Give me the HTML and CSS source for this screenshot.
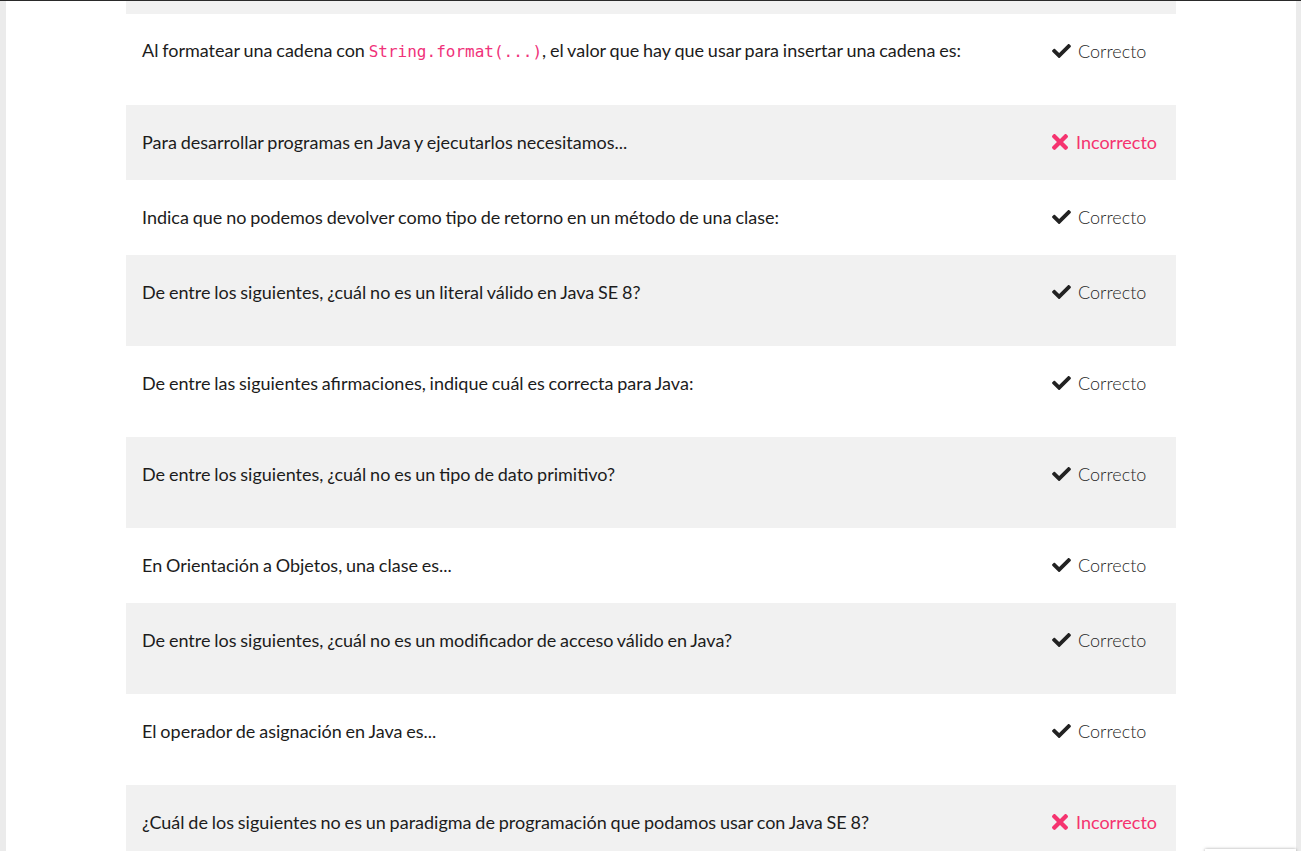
FILE: index.html
```html
<!DOCTYPE html>
<html lang="es">
<head>
<meta charset="utf-8">
<title>Resultados</title>
<link rel="stylesheet" href="styles.css">
</head>
<body>
<div class="page">
  <div class="panel">
    <div class="list">
      <div class="row gray stub"></div>
      <div class="row tall">
        <div class="q">Al formatear una cadena con <code>String.format(...)</code>, el valor que hay que usar para insertar una cadena es:</div>
        <div class="st ok"><svg class="ic-check" viewBox="0 66 512 380"><path d="M173.898 439.404l-166.4-166.4c-9.997-9.997-9.997-26.206 0-36.204l36.203-36.204c9.997-9.998 26.207-9.998 36.204 0L192 312.69 432.095 72.596c9.997-9.997 26.207-9.997 36.204 0l36.203 36.204c9.997 9.997 9.997 26.206 0 36.204l-294.4 294.401c-9.998 9.997-26.207 9.997-36.204-.001z"/></svg><span>Correcto</span></div>
      </div>
      <div class="row gray">
        <div class="q">Para desarrollar programas en Java y ejecutarlos necesitamos...</div>
        <div class="st bad"><svg class="ic-x" viewBox="0 80 352 352"><path d="M242.72 256l100.07-100.07c12.28-12.28 12.28-32.19 0-44.48l-22.24-22.24c-12.28-12.28-32.19-12.28-44.48 0L176 189.28 75.93 89.21c-12.28-12.28-32.19-12.28-44.48 0L9.21 111.45c-12.28 12.28-12.28 32.19 0 44.48L109.28 256 9.21 356.07c-12.28 12.28-12.28 32.19 0 44.48l22.24 22.24c12.28 12.28 32.2 12.28 44.48 0L176 322.72l100.07 100.07c12.28 12.28 32.2 12.28 44.48 0l22.24-22.24c12.28-12.28 12.28-32.19 0-44.48L242.72 256z"/></svg><span>Incorrecto</span></div>
      </div>
      <div class="row">
        <div class="q">Indica que no podemos devolver como tipo de retorno en un método de una clase:</div>
        <div class="st ok"><svg class="ic-check" viewBox="0 66 512 380"><path d="M173.898 439.404l-166.4-166.4c-9.997-9.997-9.997-26.206 0-36.204l36.203-36.204c9.997-9.998 26.207-9.998 36.204 0L192 312.69 432.095 72.596c9.997-9.997 26.207-9.997 36.204 0l36.203 36.204c9.997 9.997 9.997 26.206 0 36.204l-294.4 294.401c-9.998 9.997-26.207 9.997-36.204-.001z"/></svg><span>Correcto</span></div>
      </div>
      <div class="row gray tall">
        <div class="q">De entre los siguientes, ¿cuál no es un literal válido en Java SE 8?</div>
        <div class="st ok"><svg class="ic-check" viewBox="0 66 512 380"><path d="M173.898 439.404l-166.4-166.4c-9.997-9.997-9.997-26.206 0-36.204l36.203-36.204c9.997-9.998 26.207-9.998 36.204 0L192 312.69 432.095 72.596c9.997-9.997 26.207-9.997 36.204 0l36.203 36.204c9.997 9.997 9.997 26.206 0 36.204l-294.4 294.401c-9.998 9.997-26.207 9.997-36.204-.001z"/></svg><span>Correcto</span></div>
      </div>
      <div class="row tall">
        <div class="q">De entre las siguientes afirmaciones, indique cuál es correcta para Java:</div>
        <div class="st ok"><svg class="ic-check" viewBox="0 66 512 380"><path d="M173.898 439.404l-166.4-166.4c-9.997-9.997-9.997-26.206 0-36.204l36.203-36.204c9.997-9.998 26.207-9.998 36.204 0L192 312.69 432.095 72.596c9.997-9.997 26.207-9.997 36.204 0l36.203 36.204c9.997 9.997 9.997 26.206 0 36.204l-294.4 294.401c-9.998 9.997-26.207 9.997-36.204-.001z"/></svg><span>Correcto</span></div>
      </div>
      <div class="row gray tall">
        <div class="q">De entre los siguientes, ¿cuál no es un tipo de dato primitivo?</div>
        <div class="st ok"><svg class="ic-check" viewBox="0 66 512 380"><path d="M173.898 439.404l-166.4-166.4c-9.997-9.997-9.997-26.206 0-36.204l36.203-36.204c9.997-9.998 26.207-9.998 36.204 0L192 312.69 432.095 72.596c9.997-9.997 26.207-9.997 36.204 0l36.203 36.204c9.997 9.997 9.997 26.206 0 36.204l-294.4 294.401c-9.998 9.997-26.207 9.997-36.204-.001z"/></svg><span>Correcto</span></div>
      </div>
      <div class="row">
        <div class="q">En Orientación a Objetos, una clase es...</div>
        <div class="st ok"><svg class="ic-check" viewBox="0 66 512 380"><path d="M173.898 439.404l-166.4-166.4c-9.997-9.997-9.997-26.206 0-36.204l36.203-36.204c9.997-9.998 26.207-9.998 36.204 0L192 312.69 432.095 72.596c9.997-9.997 26.207-9.997 36.204 0l36.203 36.204c9.997 9.997 9.997 26.206 0 36.204l-294.4 294.401c-9.998 9.997-26.207 9.997-36.204-.001z"/></svg><span>Correcto</span></div>
      </div>
      <div class="row gray tall">
        <div class="q">De entre los siguientes, ¿cuál no es un modificador de acceso válido en Java?</div>
        <div class="st ok"><svg class="ic-check" viewBox="0 66 512 380"><path d="M173.898 439.404l-166.4-166.4c-9.997-9.997-9.997-26.206 0-36.204l36.203-36.204c9.997-9.998 26.207-9.998 36.204 0L192 312.69 432.095 72.596c9.997-9.997 26.207-9.997 36.204 0l36.203 36.204c9.997 9.997 9.997 26.206 0 36.204l-294.4 294.401c-9.998 9.997-26.207 9.997-36.204-.001z"/></svg><span>Correcto</span></div>
      </div>
      <div class="row tall">
        <div class="q">El operador de asignación en Java es...</div>
        <div class="st ok"><svg class="ic-check" viewBox="0 66 512 380"><path d="M173.898 439.404l-166.4-166.4c-9.997-9.997-9.997-26.206 0-36.204l36.203-36.204c9.997-9.998 26.207-9.998 36.204 0L192 312.69 432.095 72.596c9.997-9.997 26.207-9.997 36.204 0l36.203 36.204c9.997 9.997 9.997 26.206 0 36.204l-294.4 294.401c-9.998 9.997-26.207 9.997-36.204-.001z"/></svg><span>Correcto</span></div>
      </div>
      <div class="row gray tall">
        <div class="q">¿Cuál de los siguientes no es un paradigma de programación que podamos usar con Java SE 8?</div>
        <div class="st bad"><svg class="ic-x" viewBox="0 80 352 352"><path d="M242.72 256l100.07-100.07c12.28-12.28 12.28-32.19 0-44.48l-22.24-22.24c-12.28-12.28-32.19-12.28-44.48 0L176 189.28 75.93 89.21c-12.28-12.28-32.19-12.28-44.48 0L9.21 111.45c-12.28 12.28-12.28 32.19 0 44.48L109.28 256 9.21 356.07c-12.28 12.28-12.28 32.19 0 44.48l22.24 22.24c12.28 12.28 32.2 12.28 44.48 0L176 322.72l100.07 100.07c12.28 12.28 32.2 12.28 44.48 0l22.24-22.24c12.28-12.28 12.28-32.19 0-44.48L242.72 256z"/></svg><span>Incorrecto</span></div>
      </div>
    </div>
  </div>
</div>
<div class="toast"></div>
</body>
</html>
```
FILE: styles.css
```css
html, body {
  margin: 0;
  padding: 0;
  height: 100%;
  overflow: hidden;
}
body {
  background: #ebebeb;
  border-top: 1px solid #2a2a2a;
  font-family: Lato, "Open Sans", sans-serif;
  color: #1c1c1c;
}
.page {
  padding: 0 5px 0 6px;
}
.panel {
  background: #ffffff;
  min-height: 900px;
}
.list {
  width: 1050px;
  margin: 0 auto;
}
.row {
  display: flex;
  align-items: center;
  height: 75px;
  padding: 0 0 2px 16px;
  box-sizing: border-box;
  background: #ffffff;
}
.row.tall {
  height: 91px;
  padding-bottom: 18px;
}
.row.gray {
  background: #f1f1f1;
}
.row.stub {
  height: 13px;
  padding: 0;
}
.q {
  flex: 1;
  font-size: 18px;
  line-height: 24px;
  word-spacing: -0.8px;
}
code {
  font-family: "DejaVu Sans Mono", monospace;
  font-size: 16px;
  color: #f0327a;
  word-spacing: 0;
}
.st {
  width: 125px;
  display: flex;
  align-items: center;
  font-size: 18px;
  line-height: 24px;
}
.st.ok {
  color: #262626;
  font-weight: 300;
}
.st.ok svg {
  width: 19px;
  height: 14px;
  fill: #222222;
  margin-left: 1px;
  margin-right: 7px;
}
.st.bad {
  color: #f5336f;
}
.st.bad svg {
  width: 16px;
  height: 16px;
  fill: #f5336f;
  margin-left: 1px;
  margin-right: 8px;
}
.toast {
  position: fixed;
  right: 5px;
  bottom: -40px;
  width: 91px;
  height: 42px;
  background: #ffffff;
  box-shadow: 0 0 3px rgba(0, 0, 0, 0.35);
}
```
